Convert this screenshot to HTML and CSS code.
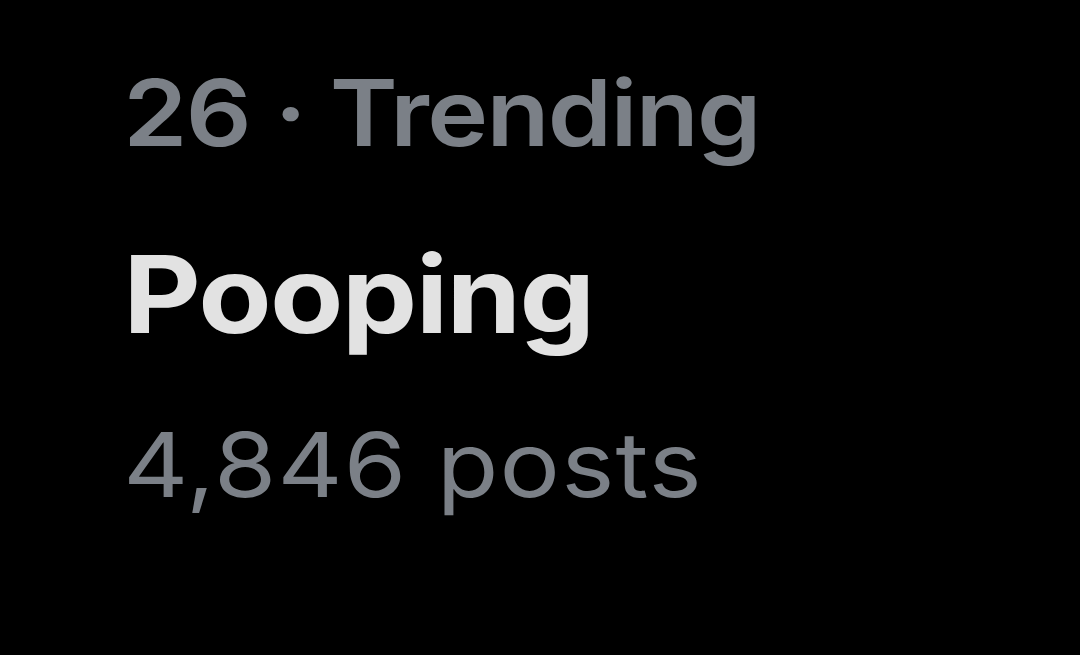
FILE: index.html
```html
<!DOCTYPE html>
<html>
<head>
<meta charset="utf-8">
<link rel="stylesheet" href="styles.css">
</head>
<body>
<div class="trend">
  <div class="meta">26 · Trending</div>
  <div class="title">Pooping</div>
  <div class="count">4,846 posts</div>
</div>
</body>
</html>
```
FILE: styles.css
```css
html, body {
  margin: 0;
  padding: 0;
  background: #000;
  width: 1080px;
  height: 655px;
  overflow: hidden;
}
.trend {
  display: flex;
  flex-direction: column;
  width: max-content;
  padding: 58px 0 0 110px;
  font-family: Inter, "Noto Sans", sans-serif;
  transform: scaleX(1.12);
  transform-origin: 0 0;
  white-space: nowrap;
}
.meta {
  font-size: 92px;
  font-weight: 600;
  color: #7b8087;
  line-height: 110px;
  letter-spacing: -1.5px;
}
.title {
  margin-top: 61px;
  font-size: 107px;
  font-weight: 700;
  color: #e2e2e2;
  line-height: 130px;
  letter-spacing: -1.5px;
}
.count {
  margin-top: 51px;
  font-size: 90px;
  font-weight: 400;
  color: #7b8087;
  line-height: 110px;
  letter-spacing: 1px;
}
```
